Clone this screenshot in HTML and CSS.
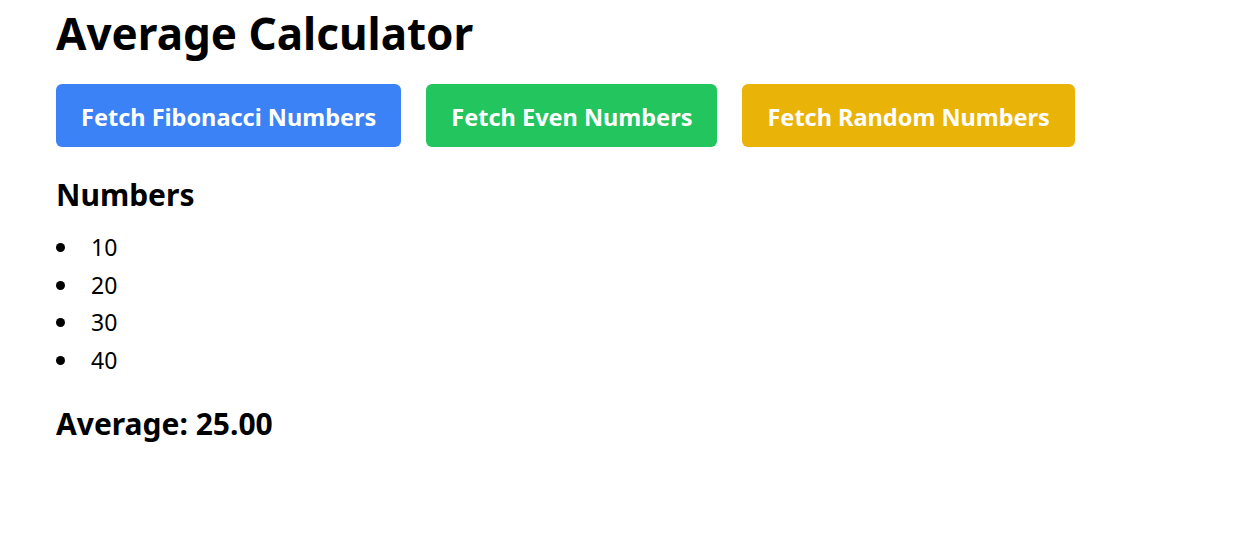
FILE: index.html
```html
<!DOCTYPE html>
<html>
<head>
<meta charset="utf-8">
<link rel="stylesheet" href="styles.css">
</head>
<body>
<div class="app">
  <h1 class="title">Average Calculator</h1>
  <div class="buttons">
    <button class="btn btn-blue">Fetch Fibonacci Numbers</button>
    <button class="btn btn-green">Fetch Even Numbers</button>
    <button class="btn btn-yellow">Fetch Random Numbers</button>
  </div>
  <h2 class="subtitle">Numbers</h2>
  <ul class="numbers">
    <li>10</li>
    <li>20</li>
    <li>30</li>
    <li>40</li>
  </ul>
  <h2 class="average">Average: 25.00</h2>
</div>
</body>
</html>
```
FILE: styles.css
```css
html, body {
  margin: 0;
  padding: 0;
  background: #fff;
}
body {
  font-family: "Noto Sans", "Open Sans", sans-serif;
  color: #000;
}
.app {
  padding: 0 56px;
  display: flex;
  flex-direction: column;
  align-items: flex-start;
}
.title {
  font-size: 44px;
  font-weight: 700;
  line-height: 52px;
  margin: 7px 0 25px;
}
.buttons {
  display: flex;
  gap: 25px;
}
.btn {
  font-family: inherit;
  font-size: 23.5px;
  font-weight: 700;
  color: #fff;
  border: none;
  border-radius: 6px;
  height: 63px;
  padding: 2px 25px 0;
  cursor: pointer;
}
.btn-blue { background: #3b82f6; }
.btn-green { background: #22c55e; }
.btn-yellow { background: #eab308; }
.subtitle {
  font-size: 30px;
  font-weight: 700;
  line-height: 36px;
  margin: 30px 0 16px;
}
.numbers {
  margin: 0;
  padding: 0;
  list-style: none;
  font-size: 23px;
  line-height: 37.5px;
}
.numbers li {
  display: flex;
  align-items: center;
}
.numbers li::before {
  content: "";
  width: 9px;
  height: 9px;
  border-radius: 50%;
  background: #000;
  margin-right: 26px;
}
.average {
  font-size: 30px;
  font-weight: 700;
  line-height: 36px;
  margin: 27px 0 0;
}
```
